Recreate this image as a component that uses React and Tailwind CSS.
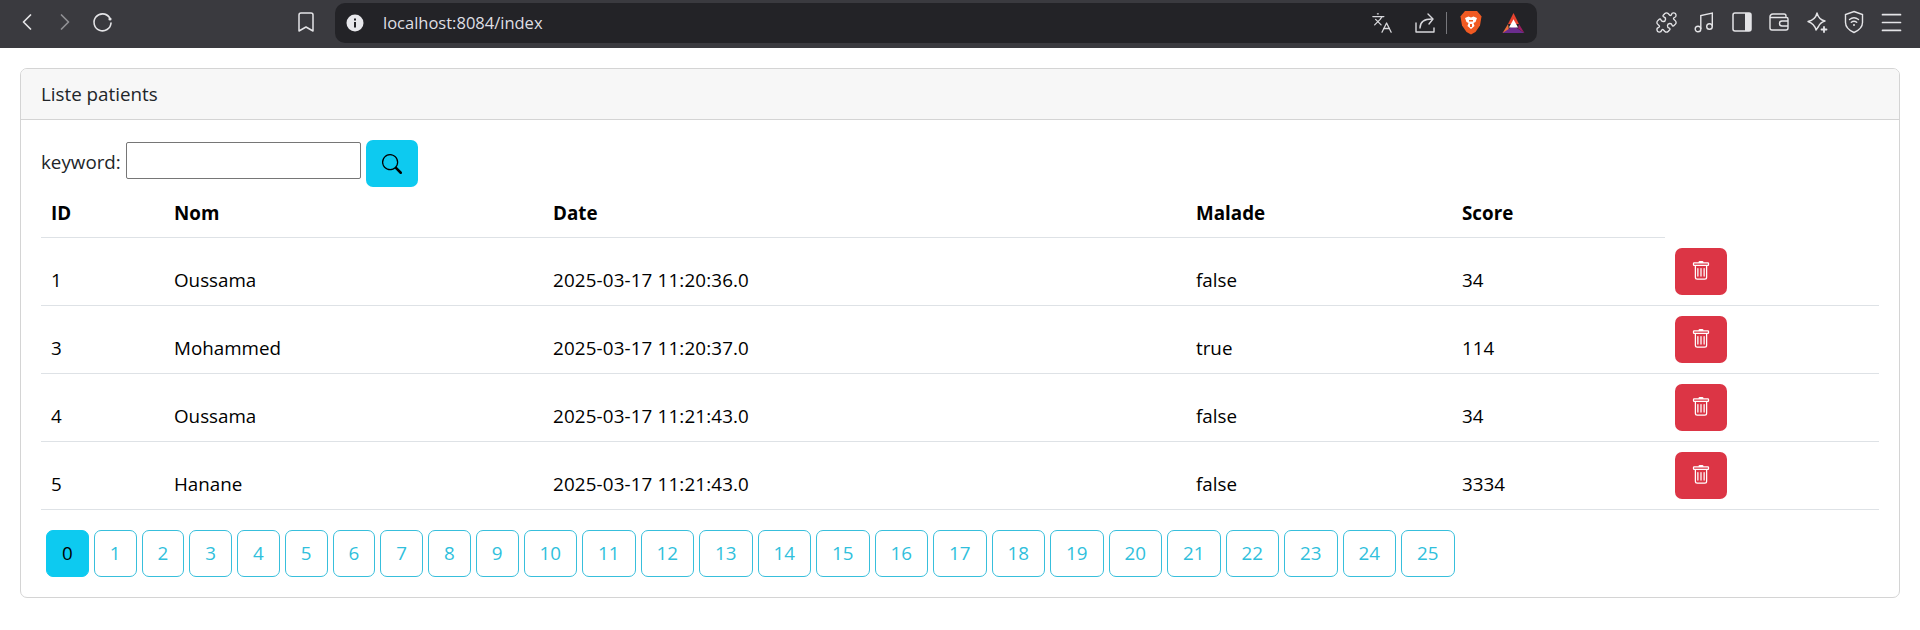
import { ChevronLeft, ChevronRight, Bookmark, Languages, Puzzle, Menu } from "lucide-react";
import { BsSearch, BsTrash } from "react-icons/bs";

const patients = [
  { id: 1, nom: "Oussama", date: "2025-03-17 11:20:36.0", malade: "false", score: 34 },
  { id: 3, nom: "Mohammed", date: "2025-03-17 11:20:37.0", malade: "true", score: 114 },
  { id: 4, nom: "Oussama", date: "2025-03-17 11:21:43.0", malade: "false", score: 34 },
  { id: 5, nom: "Hanane", date: "2025-03-17 11:21:43.0", malade: "false", score: 3334 },
];

const pages = Array.from({ length: 26 }, (_, i) => i);

function ToolIcon({ children, className = "w-[38px]" }) {
  return <div className={"h-[44px] flex items-center justify-center text-[#e4e4e7] " + className}>{children}</div>;
}

function Toolbar() {
  return (
    <div className="h-[48px] bg-[#3a3a3f] flex items-center pl-[8px] pb-[4px] font-['Open_Sans',sans-serif]">
      <ToolIcon>
        <ChevronLeft size={28} strokeWidth={1.5} />
      </ToolIcon>
      <ToolIcon className="w-[38px] opacity-50">
        <ChevronRight size={28} strokeWidth={1.5} />
      </ToolIcon>
      <ToolIcon>
        <svg width="22" height="22" viewBox="0 0 22 22" fill="none" stroke="currentColor" strokeWidth="1.6" strokeLinecap="round">
          <path d="M17.5 6.5A8.5 8.5 0 1 0 19 12" />
          <circle cx="18" cy="8" r="1.6" fill="currentColor" stroke="none" />
        </svg>
      </ToolIcon>
      <ToolIcon className="w-[38px] ml-[165px]">
        <Bookmark size={24} strokeWidth={1.5} />
      </ToolIcon>
      <div className="w-[1202px] ml-[10px] h-[40px] mt-[1px] bg-[#232327] rounded-[10px] flex items-center pl-[11px]">
        <svg width="18" height="18" viewBox="0 0 18 18">
          <circle cx="9" cy="9" r="8.5" fill="#e8e8ec" />
          <rect x="8" y="8" width="2" height="5.5" fill="#232327" />
          <rect x="8" y="4.5" width="2" height="2" fill="#232327" />
        </svg>
        <span className="ml-[19px] text-[16.500px] text-[#dfdfe3] w-[160px] whitespace-nowrap">localhost:8084/index</span>
        <div className="ml-[828px] text-[#d8d8dc]">
          <Languages size={22} strokeWidth={1.4} />
        </div>
        <svg className="ml-[20px] text-[#d8d8dc]" width="24" height="24" viewBox="0 0 24 24" fill="none" stroke="currentColor" strokeWidth="1.4" strokeLinecap="round" strokeLinejoin="round">
          <path d="M3 12l0 9h18v-4" />
          <path d="M7 17c0-6 4-9 12-9" />
          <path d="M15 3l5 5-4 5" />
        </svg>
        <div className="ml-[9px] w-px h-[22px] bg-[#77777c]" />
        <svg className="ml-[13px]" width="22" height="25" viewBox="0 0 22 25">
          <path d="M5 1h12l3 3.5 1.500 2-1.500 9-4.500 6.500-4.500 2.500-4.500-2.500-4.500-6.500-1.500-9 1.500-2z" fill="#f15a22" />
          <path d="M5 8l3.500-1.500 2.500 1 2.500-1 3.500 1.500-1.500 4-2 1 1 3-3.500 3-3.500-3 1-3-2-1z" fill="#fff" />
          <path d="M9 10h4v1.500h-4zM10 14h2v3h-2z" fill="#f15a22" />
        </svg>
        <svg className="ml-[20px]" width="23" height="20" viewBox="0 0 24 22">
          <path d="M12 0L18 12H6z" fill="#e8432e" />
          <path d="M6 12L0 22h7.500z" fill="#f0703a" />
          <path d="M0 22h24L12 14z" fill="#6b2d8e" />
          <path d="M18 12l6 10-7-5z" fill="#9e1f63" />
          <path d="M12 7l5 9H7z" fill="#fff" />
        </svg>
      </div>
      <ToolIcon className="w-[37.5px] ml-[111px]">
        <Puzzle size={23} strokeWidth={1.4} />
      </ToolIcon>
      <ToolIcon className="w-[37.5px]">
        <svg width="24" height="24" viewBox="0 0 24 24" fill="none" stroke="currentColor" strokeWidth="1.4">
          <circle cx="6" cy="19" r="2.800" />
          <circle cx="17.500" cy="16.500" r="2.800" />
          <path d="M8.800 19V5.500L20.300 3v13.500" />
        </svg>
      </ToolIcon>
      <ToolIcon className="w-[37.5px]">
        <svg width="20" height="20" viewBox="0 0 20 20">
          <rect x="1" y="1" width="18" height="18" rx="2" fill="none" stroke="currentColor" strokeWidth="1.500" />
          <rect x="13" y="1" width="6" height="18" fill="currentColor" />
        </svg>
      </ToolIcon>
      <ToolIcon className="w-[37.5px]">
        <svg width="20" height="20" viewBox="0 0 20 20" fill="none" stroke="currentColor" strokeWidth="1.400">
          <path d="M1 5.500V16a2 2 0 0 0 2 2h14a2 2 0 0 0 2-2V7a1.500 1.500 0 0 0-1.500-1.500H1zM1 5.500A3 3 0 0 1 4 2h11a2 2 0 0 1 2 2v1.500" />
          <path d="M19 9h-6a1.500 1.500 0 0 0 0 5h6" />
        </svg>
      </ToolIcon>
      <ToolIcon className="w-[37.5px]">
        <svg width="24" height="24" viewBox="0 0 24 24" fill="none" stroke="currentColor" strokeWidth="1.400" strokeLinejoin="round" strokeLinecap="round">
          <path d="M12 3c1 4 3.500 7 8 8-3.500 1-5.500 3-6.500 5.500L11 20c-1-4-3.500-7-8-8.500 4.500-1 8-4 9-8.500z" />
          <path d="M19 17v5M16.500 19.500h5" strokeWidth="1.800" />
        </svg>
      </ToolIcon>
      <ToolIcon className="w-[37.5px]">
        <svg width="22" height="24" viewBox="0 0 22 24" fill="none" stroke="currentColor" strokeWidth="1.400" strokeLinecap="round">
          <path d="M11 1.500l8.500 3v8c0 5-4 8-8.500 10-4.500-2-8.500-5-8.500-10v-8z" />
          <path d="M6.500 9.500c2.800-2.200 6.200-2.200 9 0M8.300 12.200c1.700-1.300 3.700-1.300 5.400 0" />
          <circle cx="11" cy="15" r="1" fill="currentColor" stroke="none" />
        </svg>
      </ToolIcon>
      <ToolIcon className="w-[37.5px]">
        <Menu size={27} strokeWidth={1.5} />
      </ToolIcon>
    </div>
  );
}

export default function App() {
  return (
    <div className="min-h-[630px] bg-white font-['Open_Sans',sans-serif] text-[18.800px] leading-[29px] text-black overflow-hidden">
      <Toolbar />
      <div className="mt-[20px] mx-[20px] border border-[#d4d4d4] rounded-[7px] overflow-hidden">
        <div className="h-[51px] bg-[#f7f7f7] border-b border-[#d4d4d4] px-[20px] pt-[1px] flex items-center text-[#212529]">
          Liste patients
        </div>
        <div className="px-[20px] pt-[20px] pb-[20px]">
          <form className="flex items-start h-[48px]">
            <label className="mt-[8px] text-[#212529]">keyword:</label>
            <input type="text" className="w-[235px] h-[37px] mt-[2px] ml-[5px] border border-[#767676] rounded-[2px]" />
            <button type="button" className="w-[52px] h-[47px] ml-[5px] bg-[#0dcaf0] rounded-[7px] flex items-center justify-center">
              <BsSearch size={20} />
            </button>
          </form>
          <table className="w-[1838px] table-fixed border-collapse">
            <colgroup>
              <col className="w-[123px]" />
              <col className="w-[379px]" />
              <col className="w-[643px]" />
              <col className="w-[266px]" />
              <col className="w-[213px]" />
              <col className="w-[214px]" />
            </colgroup>
            <thead>
              <tr>
                {["ID", "Nom", "Date", "Malade", "Score"].map((h) => (
                  <th key={h} className="px-[10px] pt-[11px] pb-[9px] text-left font-bold border-b border-[#dee2e6]">
                    {h}
                  </th>
                ))}
              </tr>
            </thead>
            <tbody>
              {patients.map((p) => (
                <tr key={p.id} className="border-b border-[#dee2e6]">
                  <td className="p-[10px] align-bottom">{p.id}</td>
                  <td className="p-[10px] align-bottom">{p.nom}</td>
                  <td className="p-[10px] align-bottom tracking-[0.15px]">{p.date}</td>
                  <td className="p-[10px] align-bottom">{p.malade}</td>
                  <td className="p-[10px] align-bottom">{p.score}</td>
                  <td className="p-[10px] align-bottom">
                    <button type="button" className="w-[52px] h-[47px] bg-[#dc3545] rounded-[7px] flex items-center justify-center text-white">
                      <BsTrash size={20} />
                    </button>
                  </td>
                </tr>
              ))}
            </tbody>
          </table>
          <ul className="flex gap-[5px] mt-[20px] ml-[5px]">
            {pages.map((n) => (
              <li key={n}>
                <a
                  className={
                    (n < 10 ? "w-[42.750px] " : "w-[53.500px] ") +
                    (n === 0
                      ? "h-[47px] flex items-center justify-center rounded-[7px] border border-[#0dcaf0] bg-[#0dcaf0] text-black"
                      : "h-[47px] flex items-center justify-center rounded-[7px] border border-[#38bfdc] text-[#30bfdc]")
                  }
                >
                  {n}
                </a>
              </li>
            ))}
          </ul>
        </div>
      </div>
    </div>
  );
}
